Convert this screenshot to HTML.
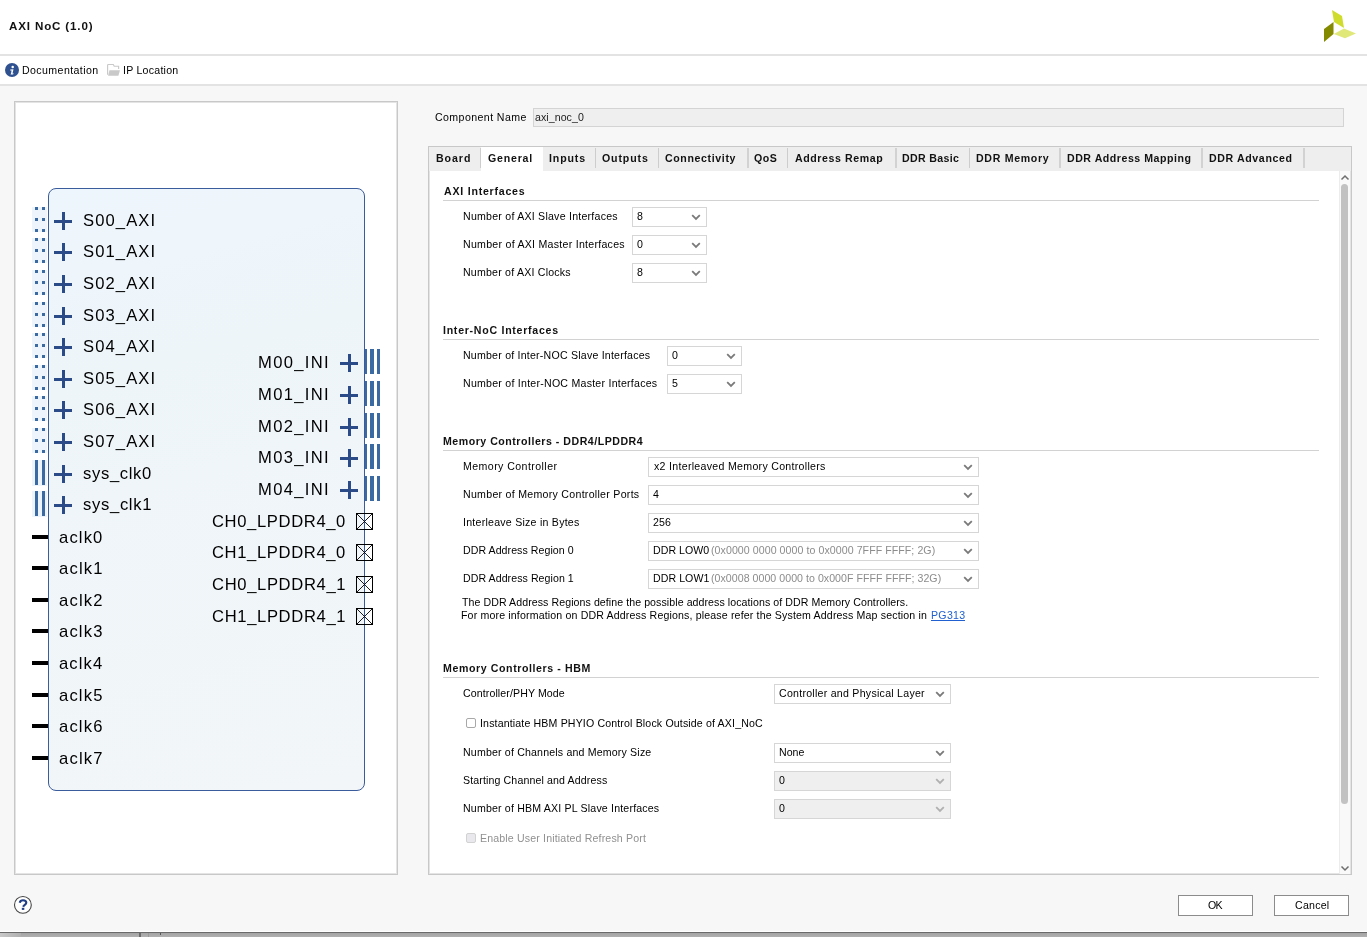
<!DOCTYPE html>
<html><head><meta charset="utf-8">
<style>
*{margin:0;padding:0;box-sizing:border-box}
html,body{width:1367px;height:937px;overflow:hidden;background:#f7f7f7;font-family:"Liberation Sans",sans-serif;color:#1e1e1e}
.abs{position:absolute}
.t{position:absolute;white-space:nowrap;will-change:transform}
.combo{position:absolute;background:#fff;border:1px solid #d6d6d6;height:20px}
.combo.dis{background:#efefef}
.sep{position:absolute;height:1px;background:#d2d2d2}
.tsep{position:absolute;top:148px;width:1px;height:20px;background:#cdcdcd}
</style></head><body>

<div class="abs" style="left:0;top:0;width:1367px;height:54px;background:#fff"></div>
<div class="abs" style="left:0;top:54px;width:1367px;height:2px;background:#e3e3e3"></div>
<div class="t" style="left:8.81px;top:20px;font-size:11.6px;line-height:11.6px;font-weight:bold;letter-spacing:0.841px;color:#111;">AXI NoC (1.0)</div>
<svg class="abs" style="left:1320px;top:8px" width="40" height="38" viewBox="1320 8 40 38">
<polygon points="1332,10 1342,16 1344,28 1334,22" fill="#d0dc2c"/>
<polygon points="1324,29 1333.5,22 1333.5,34 1324,42" fill="#848a00"/>
<polygon points="1333.8,34 1344,28.5 1356,33.4 1345,38.3" fill="#e0e87a"/>
</svg>
<div class="abs" style="left:0;top:56px;width:1367px;height:28px;background:#fff"></div>
<div class="abs" style="left:0;top:84px;width:1367px;height:2px;background:#e3e3e3"></div>
<svg class="abs" style="left:5px;top:63px" width="14" height="14" viewBox="0 0 14 14">
<circle cx="7" cy="7" r="7" fill="#2f5190"/>
<path d="M5.3 6.5 L8.5 6.2 L7.5 10.5 L8.7 10.3 L8.1 11.4 L5.5 11.5 L6.0 10.6 L6.6 7.5 L5.2 7.5 Z" fill="#fff"/>
<circle cx="7.7" cy="3.9" r="1.25" fill="#fff"/>
</svg>
<div class="t" style="left:21.83px;top:65px;font-size:10.6px;line-height:10.6px;letter-spacing:0.405px;color:#000;">Documentation</div>
<svg class="abs" style="left:107px;top:63px" width="15" height="14" viewBox="0 0 15 14">
<path d="M0.6 11.8 L0.6 2.2 Q0.6 1.5 1.3 1.5 L6.3 1.5 L7.2 3.2 L11.6 3.2 L11.6 5.9" fill="none" stroke="#c9c9c9" stroke-width="1.15"/>
<path d="M2.4 7.2 L13 7.2 L11.4 12.8 L1.1 12.8 Z" fill="#c9c9c9"/>
</svg>
<div class="t" style="left:123.42px;top:65px;font-size:10.6px;line-height:10.6px;letter-spacing:0.243px;color:#000;">IP Location</div>
<div class="abs" style="left:14px;top:101px;width:384px;height:774px;background:#fff;border:1px solid #c8c8c8;box-shadow:inset 0 0 0 1px #e4e4e4"></div>
<div class="abs" style="left:48px;top:188px;width:317px;height:603px;border:1px solid #3a5b9c;border-radius:8px;background:linear-gradient(165deg,#eef6fd 0%,#eef5f9 30%,#f2f6f8 100%)"></div>
<div class="abs" style="left:32px;top:207px;width:15px;height:25px;background:#edf4fb"></div>
<div class="abs" style="left:35px;top:207px;width:3px;height:3px;background:#3b6aa2"></div>
<div class="abs" style="left:42px;top:207px;width:3px;height:3px;background:#3b6aa2"></div>
<div class="abs" style="left:35px;top:218px;width:3px;height:3px;background:#3b6aa2"></div>
<div class="abs" style="left:42px;top:218px;width:3px;height:3px;background:#3b6aa2"></div>
<div class="abs" style="left:35px;top:229px;width:3px;height:3px;background:#3b6aa2"></div>
<div class="abs" style="left:42px;top:229px;width:3px;height:3px;background:#3b6aa2"></div>
<div class="abs" style="left:54px;top:220px;width:18px;height:3px;background:#2b4a88"></div><div class="abs" style="left:62px;top:212px;width:3px;height:18px;background:#2b4a88"></div>
<div class="t" style="left:82.85px;top:213px;font-size:16.6px;line-height:16.6px;letter-spacing:1.094px;color:#000;">S00_AXI</div>
<div class="abs" style="left:32px;top:238px;width:15px;height:25px;background:#edf4fb"></div>
<div class="abs" style="left:35px;top:238px;width:3px;height:3px;background:#3b6aa2"></div>
<div class="abs" style="left:42px;top:238px;width:3px;height:3px;background:#3b6aa2"></div>
<div class="abs" style="left:35px;top:249px;width:3px;height:3px;background:#3b6aa2"></div>
<div class="abs" style="left:42px;top:249px;width:3px;height:3px;background:#3b6aa2"></div>
<div class="abs" style="left:35px;top:260px;width:3px;height:3px;background:#3b6aa2"></div>
<div class="abs" style="left:42px;top:260px;width:3px;height:3px;background:#3b6aa2"></div>
<div class="abs" style="left:54px;top:251px;width:18px;height:3px;background:#2b4a88"></div><div class="abs" style="left:62px;top:243px;width:3px;height:18px;background:#2b4a88"></div>
<div class="t" style="left:82.85px;top:244px;font-size:16.6px;line-height:16.6px;letter-spacing:1.094px;color:#000;">S01_AXI</div>
<div class="abs" style="left:32px;top:270px;width:15px;height:25px;background:#edf4fb"></div>
<div class="abs" style="left:35px;top:270px;width:3px;height:3px;background:#3b6aa2"></div>
<div class="abs" style="left:42px;top:270px;width:3px;height:3px;background:#3b6aa2"></div>
<div class="abs" style="left:35px;top:281px;width:3px;height:3px;background:#3b6aa2"></div>
<div class="abs" style="left:42px;top:281px;width:3px;height:3px;background:#3b6aa2"></div>
<div class="abs" style="left:35px;top:292px;width:3px;height:3px;background:#3b6aa2"></div>
<div class="abs" style="left:42px;top:292px;width:3px;height:3px;background:#3b6aa2"></div>
<div class="abs" style="left:54px;top:283px;width:18px;height:3px;background:#2b4a88"></div><div class="abs" style="left:62px;top:275px;width:3px;height:18px;background:#2b4a88"></div>
<div class="t" style="left:82.85px;top:276px;font-size:16.6px;line-height:16.6px;letter-spacing:1.094px;color:#000;">S02_AXI</div>
<div class="abs" style="left:32px;top:302px;width:15px;height:25px;background:#edf4fb"></div>
<div class="abs" style="left:35px;top:302px;width:3px;height:3px;background:#3b6aa2"></div>
<div class="abs" style="left:42px;top:302px;width:3px;height:3px;background:#3b6aa2"></div>
<div class="abs" style="left:35px;top:313px;width:3px;height:3px;background:#3b6aa2"></div>
<div class="abs" style="left:42px;top:313px;width:3px;height:3px;background:#3b6aa2"></div>
<div class="abs" style="left:35px;top:324px;width:3px;height:3px;background:#3b6aa2"></div>
<div class="abs" style="left:42px;top:324px;width:3px;height:3px;background:#3b6aa2"></div>
<div class="abs" style="left:54px;top:315px;width:18px;height:3px;background:#2b4a88"></div><div class="abs" style="left:62px;top:307px;width:3px;height:18px;background:#2b4a88"></div>
<div class="t" style="left:82.85px;top:308px;font-size:16.6px;line-height:16.6px;letter-spacing:1.094px;color:#000;">S03_AXI</div>
<div class="abs" style="left:32px;top:333px;width:15px;height:25px;background:#edf4fb"></div>
<div class="abs" style="left:35px;top:333px;width:3px;height:3px;background:#3b6aa2"></div>
<div class="abs" style="left:42px;top:333px;width:3px;height:3px;background:#3b6aa2"></div>
<div class="abs" style="left:35px;top:344px;width:3px;height:3px;background:#3b6aa2"></div>
<div class="abs" style="left:42px;top:344px;width:3px;height:3px;background:#3b6aa2"></div>
<div class="abs" style="left:35px;top:355px;width:3px;height:3px;background:#3b6aa2"></div>
<div class="abs" style="left:42px;top:355px;width:3px;height:3px;background:#3b6aa2"></div>
<div class="abs" style="left:54px;top:346px;width:18px;height:3px;background:#2b4a88"></div><div class="abs" style="left:62px;top:338px;width:3px;height:18px;background:#2b4a88"></div>
<div class="t" style="left:82.85px;top:339px;font-size:16.6px;line-height:16.6px;letter-spacing:1.094px;color:#000;">S04_AXI</div>
<div class="abs" style="left:32px;top:365px;width:15px;height:25px;background:#edf4fb"></div>
<div class="abs" style="left:35px;top:365px;width:3px;height:3px;background:#3b6aa2"></div>
<div class="abs" style="left:42px;top:365px;width:3px;height:3px;background:#3b6aa2"></div>
<div class="abs" style="left:35px;top:376px;width:3px;height:3px;background:#3b6aa2"></div>
<div class="abs" style="left:42px;top:376px;width:3px;height:3px;background:#3b6aa2"></div>
<div class="abs" style="left:35px;top:387px;width:3px;height:3px;background:#3b6aa2"></div>
<div class="abs" style="left:42px;top:387px;width:3px;height:3px;background:#3b6aa2"></div>
<div class="abs" style="left:54px;top:378px;width:18px;height:3px;background:#2b4a88"></div><div class="abs" style="left:62px;top:370px;width:3px;height:18px;background:#2b4a88"></div>
<div class="t" style="left:82.85px;top:371px;font-size:16.6px;line-height:16.6px;letter-spacing:1.094px;color:#000;">S05_AXI</div>
<div class="abs" style="left:32px;top:396px;width:15px;height:25px;background:#edf4fb"></div>
<div class="abs" style="left:35px;top:396px;width:3px;height:3px;background:#3b6aa2"></div>
<div class="abs" style="left:42px;top:396px;width:3px;height:3px;background:#3b6aa2"></div>
<div class="abs" style="left:35px;top:407px;width:3px;height:3px;background:#3b6aa2"></div>
<div class="abs" style="left:42px;top:407px;width:3px;height:3px;background:#3b6aa2"></div>
<div class="abs" style="left:35px;top:418px;width:3px;height:3px;background:#3b6aa2"></div>
<div class="abs" style="left:42px;top:418px;width:3px;height:3px;background:#3b6aa2"></div>
<div class="abs" style="left:54px;top:409px;width:18px;height:3px;background:#2b4a88"></div><div class="abs" style="left:62px;top:401px;width:3px;height:18px;background:#2b4a88"></div>
<div class="t" style="left:82.85px;top:402px;font-size:16.6px;line-height:16.6px;letter-spacing:1.094px;color:#000;">S06_AXI</div>
<div class="abs" style="left:32px;top:428px;width:15px;height:25px;background:#edf4fb"></div>
<div class="abs" style="left:35px;top:428px;width:3px;height:3px;background:#3b6aa2"></div>
<div class="abs" style="left:42px;top:428px;width:3px;height:3px;background:#3b6aa2"></div>
<div class="abs" style="left:35px;top:439px;width:3px;height:3px;background:#3b6aa2"></div>
<div class="abs" style="left:42px;top:439px;width:3px;height:3px;background:#3b6aa2"></div>
<div class="abs" style="left:35px;top:450px;width:3px;height:3px;background:#3b6aa2"></div>
<div class="abs" style="left:42px;top:450px;width:3px;height:3px;background:#3b6aa2"></div>
<div class="abs" style="left:54px;top:441px;width:18px;height:3px;background:#2b4a88"></div><div class="abs" style="left:62px;top:433px;width:3px;height:18px;background:#2b4a88"></div>
<div class="t" style="left:82.85px;top:434px;font-size:16.6px;line-height:16.6px;letter-spacing:1.094px;color:#000;">S07_AXI</div>
<div class="abs" style="left:32px;top:460px;width:15px;height:26px;background:#edf4fb"></div>
<div class="abs" style="left:35px;top:460px;width:3px;height:25px;background:#3b6aa2"></div>
<div class="abs" style="left:42px;top:460px;width:3px;height:25px;background:#3b6aa2"></div>
<div class="abs" style="left:54px;top:473px;width:18px;height:3px;background:#2b4a88"></div><div class="abs" style="left:62px;top:465px;width:3px;height:18px;background:#2b4a88"></div>
<div class="t" style="left:83.24px;top:466px;font-size:16.6px;line-height:16.6px;letter-spacing:0.665px;color:#000;">sys_clk0</div>
<div class="abs" style="left:32px;top:491px;width:15px;height:26px;background:#edf4fb"></div>
<div class="abs" style="left:35px;top:491px;width:3px;height:25px;background:#3b6aa2"></div>
<div class="abs" style="left:42px;top:491px;width:3px;height:25px;background:#3b6aa2"></div>
<div class="abs" style="left:54px;top:504px;width:18px;height:3px;background:#2b4a88"></div><div class="abs" style="left:62px;top:496px;width:3px;height:18px;background:#2b4a88"></div>
<div class="t" style="left:83.24px;top:497px;font-size:16.6px;line-height:16.6px;letter-spacing:0.689px;color:#000;">sys_clk1</div>
<div class="abs" style="left:32px;top:535px;width:16px;height:4px;background:#000"></div>
<div class="t" style="left:59.09px;top:530px;font-size:16.6px;line-height:16.6px;letter-spacing:1.150px;color:#000;">aclk0</div>
<div class="abs" style="left:32px;top:566px;width:16px;height:4px;background:#000"></div>
<div class="t" style="left:59.09px;top:561px;font-size:16.6px;line-height:16.6px;letter-spacing:1.191px;color:#000;">aclk1</div>
<div class="abs" style="left:32px;top:598px;width:16px;height:4px;background:#000"></div>
<div class="t" style="left:59.09px;top:593px;font-size:16.6px;line-height:16.6px;letter-spacing:1.197px;color:#000;">aclk2</div>
<div class="abs" style="left:32px;top:629px;width:16px;height:4px;background:#000"></div>
<div class="t" style="left:59.09px;top:624px;font-size:16.6px;line-height:16.6px;letter-spacing:1.171px;color:#000;">aclk3</div>
<div class="abs" style="left:32px;top:661px;width:16px;height:4px;background:#000"></div>
<div class="t" style="left:59.09px;top:656px;font-size:16.6px;line-height:16.6px;letter-spacing:1.110px;color:#000;">aclk4</div>
<div class="abs" style="left:32px;top:693px;width:16px;height:4px;background:#000"></div>
<div class="t" style="left:59.09px;top:688px;font-size:16.6px;line-height:16.6px;letter-spacing:1.162px;color:#000;">aclk5</div>
<div class="abs" style="left:32px;top:724px;width:16px;height:4px;background:#000"></div>
<div class="t" style="left:59.09px;top:719px;font-size:16.6px;line-height:16.6px;letter-spacing:1.171px;color:#000;">aclk6</div>
<div class="abs" style="left:32px;top:756px;width:16px;height:4px;background:#000"></div>
<div class="t" style="left:59.09px;top:751px;font-size:16.6px;line-height:16.6px;letter-spacing:1.197px;color:#000;">aclk7</div>
<div class="abs" style="left:365px;top:349px;width:2px;height:25px;background:#3b6aa2"></div>
<div class="abs" style="left:370px;top:349px;width:4px;height:25px;background:#3b6aa2"></div>
<div class="abs" style="left:377px;top:349px;width:3px;height:25px;background:#3b6aa2"></div>
<div class="abs" style="left:340px;top:362px;width:18px;height:3px;background:#2b4a88"></div><div class="abs" style="left:348px;top:354px;width:3px;height:18px;background:#2b4a88"></div>
<div class="t" style="left:258.44px;top:355px;font-size:16.6px;line-height:16.6px;letter-spacing:1.326px;color:#000;">M00_INI</div>
<div class="abs" style="left:365px;top:381px;width:2px;height:25px;background:#3b6aa2"></div>
<div class="abs" style="left:370px;top:381px;width:4px;height:25px;background:#3b6aa2"></div>
<div class="abs" style="left:377px;top:381px;width:3px;height:25px;background:#3b6aa2"></div>
<div class="abs" style="left:340px;top:394px;width:18px;height:3px;background:#2b4a88"></div><div class="abs" style="left:348px;top:386px;width:3px;height:18px;background:#2b4a88"></div>
<div class="t" style="left:258.44px;top:387px;font-size:16.6px;line-height:16.6px;letter-spacing:1.326px;color:#000;">M01_INI</div>
<div class="abs" style="left:365px;top:413px;width:2px;height:25px;background:#3b6aa2"></div>
<div class="abs" style="left:370px;top:413px;width:4px;height:25px;background:#3b6aa2"></div>
<div class="abs" style="left:377px;top:413px;width:3px;height:25px;background:#3b6aa2"></div>
<div class="abs" style="left:340px;top:426px;width:18px;height:3px;background:#2b4a88"></div><div class="abs" style="left:348px;top:418px;width:3px;height:18px;background:#2b4a88"></div>
<div class="t" style="left:258.44px;top:419px;font-size:16.6px;line-height:16.6px;letter-spacing:1.326px;color:#000;">M02_INI</div>
<div class="abs" style="left:365px;top:444px;width:2px;height:25px;background:#3b6aa2"></div>
<div class="abs" style="left:370px;top:444px;width:4px;height:25px;background:#3b6aa2"></div>
<div class="abs" style="left:377px;top:444px;width:3px;height:25px;background:#3b6aa2"></div>
<div class="abs" style="left:340px;top:457px;width:18px;height:3px;background:#2b4a88"></div><div class="abs" style="left:348px;top:449px;width:3px;height:18px;background:#2b4a88"></div>
<div class="t" style="left:258.44px;top:450px;font-size:16.6px;line-height:16.6px;letter-spacing:1.326px;color:#000;">M03_INI</div>
<div class="abs" style="left:365px;top:476px;width:2px;height:25px;background:#3b6aa2"></div>
<div class="abs" style="left:370px;top:476px;width:4px;height:25px;background:#3b6aa2"></div>
<div class="abs" style="left:377px;top:476px;width:3px;height:25px;background:#3b6aa2"></div>
<div class="abs" style="left:340px;top:489px;width:18px;height:3px;background:#2b4a88"></div><div class="abs" style="left:348px;top:481px;width:3px;height:18px;background:#2b4a88"></div>
<div class="t" style="left:258.44px;top:482px;font-size:16.6px;line-height:16.6px;letter-spacing:1.326px;color:#000;">M04_INI</div>
<svg class="abs" style="left:356px;top:513px" width="17" height="17" viewBox="0 0 17 17"><rect x="0.5" y="0.5" width="16" height="16" fill="none" stroke="#000" stroke-width="1"/><path d="M1 1 L16 16 M16 1 L1 16" stroke="#000" stroke-width="0.9"/></svg>
<div class="t" style="left:212.06px;top:514px;font-size:16.6px;line-height:16.6px;letter-spacing:0.635px;color:#000;">CH0_LPDDR4_0</div>
<svg class="abs" style="left:356px;top:544px" width="17" height="17" viewBox="0 0 17 17"><rect x="0.5" y="0.5" width="16" height="16" fill="none" stroke="#000" stroke-width="1"/><path d="M1 1 L16 16 M16 1 L1 16" stroke="#000" stroke-width="0.9"/></svg>
<div class="t" style="left:212.06px;top:545px;font-size:16.6px;line-height:16.6px;letter-spacing:0.635px;color:#000;">CH1_LPDDR4_0</div>
<svg class="abs" style="left:356px;top:576px" width="17" height="17" viewBox="0 0 17 17"><rect x="0.5" y="0.5" width="16" height="16" fill="none" stroke="#000" stroke-width="1"/><path d="M1 1 L16 16 M16 1 L1 16" stroke="#000" stroke-width="0.9"/></svg>
<div class="t" style="left:212.06px;top:577px;font-size:16.6px;line-height:16.6px;letter-spacing:0.650px;color:#000;">CH0_LPDDR4_1</div>
<svg class="abs" style="left:356px;top:608px" width="17" height="17" viewBox="0 0 17 17"><rect x="0.5" y="0.5" width="16" height="16" fill="none" stroke="#000" stroke-width="1"/><path d="M1 1 L16 16 M16 1 L1 16" stroke="#000" stroke-width="0.9"/></svg>
<div class="t" style="left:212.06px;top:609px;font-size:16.6px;line-height:16.6px;letter-spacing:0.650px;color:#000;">CH1_LPDDR4_1</div>
<svg class="abs" style="left:13px;top:895px" width="20" height="20" viewBox="0 0 20 20">
<circle cx="9.9" cy="9.9" r="8.4" fill="#fff" stroke="#454545" stroke-width="1.1"/>
<path d="M6.7 7.7 C7.1 6.0 8.3 5.2 10 5.2 C11.9 5.2 13.3 6.2 13.3 7.8 C13.3 9.6 10.9 9.9 10.1 11.7" fill="none" stroke="#213f86" stroke-width="2.1"/>
<rect x="8.8" y="12.8" width="2.5" height="2.1" fill="#213f86"/>
</svg>
<div class="t" style="left:435.06px;top:112px;font-size:10.6px;line-height:10.6px;letter-spacing:0.414px;color:#000;">Component Name</div>
<div class="abs" style="left:533px;top:108px;width:811px;height:19px;background:#efefef;border:1px solid #d4d4d4"></div>
<div class="t" style="left:535.25px;top:112px;font-size:10.6px;line-height:10.6px;letter-spacing:0.067px;color:#222;">axi_noc_0</div>
<div class="abs" style="left:428px;top:146px;width:924px;height:729px;background:#fff;border:1px solid #c8c8c8;box-shadow:inset 0 0 0 1px #e4e4e4"></div>
<div class="abs" style="left:429px;top:147px;width:922px;height:24px;background:#eeeeee"></div>
<div class="abs" style="left:481px;top:147px;width:62px;height:24px;background:#fff"></div>
<div class="t" style="left:436.09px;top:153px;font-size:10.6px;line-height:10.6px;font-weight:bold;letter-spacing:0.946px;color:#111;">Board</div>
<div class="tsep" style="left:480px"></div>
<div class="t" style="left:487.57px;top:153px;font-size:10.6px;line-height:10.6px;font-weight:bold;letter-spacing:0.785px;color:#111;">General</div>
<div class="t" style="left:548.79px;top:153px;font-size:10.6px;line-height:10.6px;font-weight:bold;letter-spacing:0.870px;color:#111;">Inputs</div>
<div class="tsep" style="left:595px"></div>
<div class="t" style="left:602.37px;top:153px;font-size:10.6px;line-height:10.6px;font-weight:bold;letter-spacing:0.874px;color:#111;">Outputs</div>
<div class="tsep" style="left:658px"></div>
<div class="t" style="left:665.47px;top:153px;font-size:10.6px;line-height:10.6px;font-weight:bold;letter-spacing:0.626px;color:#111;">Connectivity</div>
<div class="tsep" style="left:747px;width:2px;background:#d2d2d2"></div>
<div class="t" style="left:754.27px;top:153px;font-size:10.6px;line-height:10.6px;font-weight:bold;letter-spacing:0.529px;color:#111;">QoS</div>
<div class="tsep" style="left:787px"></div>
<div class="t" style="left:795.04px;top:153px;font-size:10.6px;line-height:10.6px;font-weight:bold;letter-spacing:0.583px;color:#111;">Address Remap</div>
<div class="tsep" style="left:895px;width:2px;background:#d2d2d2"></div>
<div class="t" style="left:901.69px;top:153px;font-size:10.6px;line-height:10.6px;font-weight:bold;letter-spacing:0.353px;color:#111;">DDR Basic</div>
<div class="tsep" style="left:969px"></div>
<div class="t" style="left:976.09px;top:153px;font-size:10.6px;line-height:10.6px;font-weight:bold;letter-spacing:0.690px;color:#111;">DDR Memory</div>
<div class="tsep" style="left:1059px;width:2px;background:#d2d2d2"></div>
<div class="t" style="left:1066.79px;top:153px;font-size:10.6px;line-height:10.6px;font-weight:bold;letter-spacing:0.532px;color:#111;">DDR Address Mapping</div>
<div class="tsep" style="left:1201px;width:2px;background:#d2d2d2"></div>
<div class="t" style="left:1208.69px;top:153px;font-size:10.6px;line-height:10.6px;font-weight:bold;letter-spacing:0.622px;color:#111;">DDR Advanced</div>
<div class="tsep" style="left:1303px;width:2px;background:#d2d2d2"></div>
<div class="abs" style="left:1339px;top:171px;width:11px;height:703px;background:#f9f9f9;border-left:1px solid #ececec"></div>
<svg class="abs" style="left:1340px;top:173px" width="10" height="9" viewBox="0 0 10 9"><path d="M1.5 6.5 L5 3 L8.5 6.5" fill="none" stroke="#6e6e6e" stroke-width="1.5"/></svg>
<div class="abs" style="left:1341px;top:184px;width:7px;height:620px;background:#c2c2c2;border-radius:3.5px"></div>
<svg class="abs" style="left:1340px;top:864px" width="10" height="9" viewBox="0 0 10 9"><path d="M1.5 2.5 L5 6 L8.5 2.5" fill="none" stroke="#6e6e6e" stroke-width="1.5"/></svg>
<div class="t" style="left:443.74px;top:186px;font-size:10.6px;line-height:10.6px;font-weight:bold;letter-spacing:0.769px;color:#111;">AXI Interfaces</div>
<div class="sep" style="left:443px;top:200px;width:876px"></div>
<div class="t" style="left:463.03px;top:211px;font-size:10.6px;line-height:10.6px;letter-spacing:0.234px;color:#000;">Number of AXI Slave Interfaces</div>
<div class="combo" style="left:632px;top:207px;width:75px;height:20px"></div><div class="t" style="left:637.24px;top:211px;font-size:10.6px;line-height:10.6px;letter-spacing:0.026px;color:#000;">8</div><svg class="abs" style="left:691px;top:214px" width="10" height="7" viewBox="0 0 10 7"><path d="M1.2 1.2 L5 4.9 L8.8 1.2" fill="none" stroke="#7a7a7a" stroke-width="1.8"/></svg>
<div class="t" style="left:463.03px;top:239px;font-size:10.6px;line-height:10.6px;letter-spacing:0.264px;color:#000;">Number of AXI Master Interfaces</div>
<div class="combo" style="left:632px;top:235px;width:75px;height:20px"></div><div class="t" style="left:637.29px;top:239px;font-size:10.6px;line-height:10.6px;letter-spacing:-0.067px;color:#000;">0</div><svg class="abs" style="left:691px;top:242px" width="10" height="7" viewBox="0 0 10 7"><path d="M1.2 1.2 L5 4.9 L8.8 1.2" fill="none" stroke="#7a7a7a" stroke-width="1.8"/></svg>
<div class="t" style="left:463.03px;top:267px;font-size:10.6px;line-height:10.6px;letter-spacing:0.210px;color:#000;">Number of AXI Clocks</div>
<div class="combo" style="left:632px;top:263px;width:75px;height:20px"></div><div class="t" style="left:637.24px;top:267px;font-size:10.6px;line-height:10.6px;letter-spacing:0.026px;color:#000;">8</div><svg class="abs" style="left:691px;top:270px" width="10" height="7" viewBox="0 0 10 7"><path d="M1.2 1.2 L5 4.9 L8.8 1.2" fill="none" stroke="#7a7a7a" stroke-width="1.8"/></svg>
<div class="t" style="left:443.29px;top:325px;font-size:10.6px;line-height:10.6px;font-weight:bold;letter-spacing:0.728px;color:#111;">Inter-NoC Interfaces</div>
<div class="sep" style="left:443px;top:339px;width:876px"></div>
<div class="t" style="left:463.03px;top:350px;font-size:10.6px;line-height:10.6px;letter-spacing:0.216px;color:#000;">Number of Inter-NOC Slave Interfaces</div>
<div class="combo" style="left:667px;top:346px;width:75px;height:20px"></div><div class="t" style="left:672.29px;top:350px;font-size:10.6px;line-height:10.6px;letter-spacing:-0.067px;color:#000;">0</div><svg class="abs" style="left:726px;top:353px" width="10" height="7" viewBox="0 0 10 7"><path d="M1.2 1.2 L5 4.9 L8.8 1.2" fill="none" stroke="#7a7a7a" stroke-width="1.8"/></svg>
<div class="t" style="left:463.03px;top:378px;font-size:10.6px;line-height:10.6px;letter-spacing:0.242px;color:#000;">Number of Inter-NOC Master Interfaces</div>
<div class="combo" style="left:667px;top:374px;width:75px;height:20px"></div><div class="t" style="left:672.28px;top:378px;font-size:10.6px;line-height:10.6px;letter-spacing:-0.026px;color:#000;">5</div><svg class="abs" style="left:726px;top:381px" width="10" height="7" viewBox="0 0 10 7"><path d="M1.2 1.2 L5 4.9 L8.8 1.2" fill="none" stroke="#7a7a7a" stroke-width="1.8"/></svg>
<div class="t" style="left:443.29px;top:436px;font-size:10.6px;line-height:10.6px;font-weight:bold;letter-spacing:0.516px;color:#111;">Memory Controllers - DDR4/LPDDR4</div>
<div class="sep" style="left:443px;top:450px;width:876px"></div>
<div class="t" style="left:463.03px;top:461px;font-size:10.6px;line-height:10.6px;letter-spacing:0.429px;color:#000;">Memory Controller</div>
<div class="combo" style="left:648px;top:457px;width:331px;height:20px"></div><div class="t" style="left:653.58px;top:461px;font-size:10.6px;line-height:10.6px;letter-spacing:0.297px;color:#000;">x2 Interleaved Memory Controllers</div><svg class="abs" style="left:963px;top:464px" width="10" height="7" viewBox="0 0 10 7"><path d="M1.2 1.2 L5 4.9 L8.8 1.2" fill="none" stroke="#7a7a7a" stroke-width="1.8"/></svg>
<div class="t" style="left:463.03px;top:489px;font-size:10.6px;line-height:10.6px;letter-spacing:0.280px;color:#000;">Number of Memory Controller Ports</div>
<div class="combo" style="left:648px;top:485px;width:331px;height:20px"></div><div class="t" style="left:653.46px;top:489px;font-size:10.6px;line-height:10.6px;letter-spacing:-0.341px;color:#000;">4</div><svg class="abs" style="left:963px;top:492px" width="10" height="7" viewBox="0 0 10 7"><path d="M1.2 1.2 L5 4.9 L8.8 1.2" fill="none" stroke="#7a7a7a" stroke-width="1.8"/></svg>
<div class="t" style="left:462.92px;top:517px;font-size:10.6px;line-height:10.6px;letter-spacing:0.243px;color:#000;">Interleave Size in Bytes</div>
<div class="combo" style="left:648px;top:513px;width:331px;height:20px"></div><div class="t" style="left:653.17px;top:517px;font-size:10.6px;line-height:10.6px;letter-spacing:0.157px;color:#000;">256</div><svg class="abs" style="left:963px;top:520px" width="10" height="7" viewBox="0 0 10 7"><path d="M1.2 1.2 L5 4.9 L8.8 1.2" fill="none" stroke="#7a7a7a" stroke-width="1.8"/></svg>
<div class="t" style="left:463.03px;top:545px;font-size:10.6px;line-height:10.6px;letter-spacing:0.059px;color:#000;">DDR Address Region 0</div>
<div class="combo" style="left:648px;top:541px;width:331px;height:20px"></div><div class="t" style="left:652.83px;top:545px;font-size:10.6px;line-height:10.6px;letter-spacing:0.048px;color:#000;">DDR LOW0</div><div class="t" style="left:711.44px;top:545px;font-size:10.6px;line-height:10.6px;letter-spacing:0.068px;color:#8c8c8c;">(0x0000 0000 0000 to 0x0000 7FFF FFFF; 2G)</div><svg class="abs" style="left:963px;top:548px" width="10" height="7" viewBox="0 0 10 7"><path d="M1.2 1.2 L5 4.9 L8.8 1.2" fill="none" stroke="#7a7a7a" stroke-width="1.8"/></svg>
<div class="t" style="left:463.03px;top:573px;font-size:10.6px;line-height:10.6px;letter-spacing:0.064px;color:#000;">DDR Address Region 1</div>
<div class="combo" style="left:648px;top:569px;width:331px;height:20px"></div><div class="t" style="left:652.83px;top:573px;font-size:10.6px;line-height:10.6px;letter-spacing:0.062px;color:#000;">DDR LOW1</div><div class="t" style="left:711.44px;top:573px;font-size:10.6px;line-height:10.6px;letter-spacing:0.041px;color:#8c8c8c;">(0x0008 0000 0000 to 0x000F FFFF FFFF; 32G)</div><svg class="abs" style="left:963px;top:576px" width="10" height="7" viewBox="0 0 10 7"><path d="M1.2 1.2 L5 4.9 L8.8 1.2" fill="none" stroke="#7a7a7a" stroke-width="1.8"/></svg>
<div class="t" style="left:462.06px;top:597px;font-size:10.6px;line-height:10.6px;letter-spacing:0.073px;color:#000;">The DDR Address Regions define the possible address locations of DDR Memory Controllers.</div>
<div class="t" style="left:461.43px;top:610px;font-size:10.6px;line-height:10.6px;letter-spacing:0.152px;color:#000;">For more information on DDR Address Regions, please refer the System Address Map section in</div>
<div class="t" style="left:930.63px;top:610px;font-size:10.6px;line-height:10.6px;letter-spacing:0.309px;color:#2060d0;">PG313</div>
<div class="abs" style="left:931px;top:620px;width:34px;height:1px;background:#2060d0"></div>
<div class="t" style="left:443.29px;top:663px;font-size:10.6px;line-height:10.6px;font-weight:bold;letter-spacing:0.597px;color:#111;">Memory Controllers - HBM</div>
<div class="sep" style="left:443px;top:677px;width:876px"></div>
<div class="t" style="left:463.36px;top:688px;font-size:10.6px;line-height:10.6px;letter-spacing:0.103px;color:#000;">Controller/PHY Mode</div>
<div class="combo" style="left:774px;top:684px;width:177px;height:20px"></div><div class="t" style="left:779.16px;top:688px;font-size:10.6px;line-height:10.6px;letter-spacing:0.259px;color:#000;">Controller and Physical Layer</div><svg class="abs" style="left:935px;top:691px" width="10" height="7" viewBox="0 0 10 7"><path d="M1.2 1.2 L5 4.9 L8.8 1.2" fill="none" stroke="#7a7a7a" stroke-width="1.8"/></svg>
<div class="abs" style="left:466px;top:718px;width:10px;height:10px;background:#fff;border:1px solid #a8a8a8;border-radius:2px"></div>
<div class="t" style="left:479.82px;top:718px;font-size:10.6px;line-height:10.6px;letter-spacing:0.145px;color:#000;">Instantiate HBM PHYIO Control Block Outside of AXI_NoC</div>
<div class="t" style="left:463.03px;top:747px;font-size:10.6px;line-height:10.6px;letter-spacing:0.173px;color:#000;">Number of Channels and Memory Size</div>
<div class="combo" style="left:774px;top:743px;width:177px;height:20px"></div><div class="t" style="left:778.83px;top:747px;font-size:10.6px;line-height:10.6px;letter-spacing:-0.000px;color:#000;">None</div><svg class="abs" style="left:935px;top:750px" width="10" height="7" viewBox="0 0 10 7"><path d="M1.2 1.2 L5 4.9 L8.8 1.2" fill="none" stroke="#7a7a7a" stroke-width="1.8"/></svg>
<div class="t" style="left:463.42px;top:775px;font-size:10.6px;line-height:10.6px;letter-spacing:0.127px;color:#000;">Starting Channel and Address</div>
<div class="combo dis" style="left:774px;top:771px;width:177px;height:20px"></div><div class="t" style="left:779.29px;top:775px;font-size:10.6px;line-height:10.6px;letter-spacing:-0.067px;color:#000;">0</div><svg class="abs" style="left:935px;top:778px" width="10" height="7" viewBox="0 0 10 7"><path d="M1.2 1.2 L5 4.9 L8.8 1.2" fill="none" stroke="#b0b0b0" stroke-width="1.8"/></svg>
<div class="t" style="left:463.03px;top:803px;font-size:10.6px;line-height:10.6px;letter-spacing:0.177px;color:#000;">Number of HBM AXI PL Slave Interfaces</div>
<div class="combo dis" style="left:774px;top:799px;width:177px;height:20px"></div><div class="t" style="left:779.29px;top:803px;font-size:10.6px;line-height:10.6px;letter-spacing:-0.067px;color:#000;">0</div><svg class="abs" style="left:935px;top:806px" width="10" height="7" viewBox="0 0 10 7"><path d="M1.2 1.2 L5 4.9 L8.8 1.2" fill="none" stroke="#b0b0b0" stroke-width="1.8"/></svg>
<div class="abs" style="left:466px;top:833px;width:10px;height:10px;background:#e9e9ed;border:1px solid #d2d2d2;border-radius:2px"></div>
<div class="t" style="left:479.93px;top:833px;font-size:10.6px;line-height:10.6px;letter-spacing:0.155px;color:#909090;">Enable User Initiated Refresh Port</div>
<div class="abs" style="left:1178px;top:895px;width:75px;height:21px;background:#fff;border:1px solid #8c8c8c"></div>
<div class="t" style="left:1208.30px;top:900px;font-size:10.6px;line-height:10.6px;letter-spacing:-0.694px;color:#000;">OK</div>
<div class="abs" style="left:1274px;top:895px;width:75px;height:21px;background:#fff;border:1px solid #8c8c8c"></div>
<div class="t" style="left:1295.26px;top:900px;font-size:10.6px;line-height:10.6px;letter-spacing:0.250px;color:#000;">Cancel</div>
<div class="abs" style="left:0;top:931px;width:1367px;height:1px;background:#fff"></div>
<div class="abs" style="left:0;top:932px;width:1367px;height:5px;background:linear-gradient(#6a6a6a 0,#6a6a6a 1px,#a4a4a4 1px,#b0b0b0 5px)"></div>
<div class="abs" style="left:139px;top:933px;width:2px;height:4px;background:#6c6c6c"></div>
<div class="abs" style="left:148px;top:933px;width:1px;height:4px;background:#999"></div>
<div class="abs" style="left:160px;top:933px;width:1px;height:2px;background:#555"></div>
<div class="abs" style="left:0;top:933px;width:21px;height:4px;background:linear-gradient(90deg,#c8c8c8,#b0b0b0)"></div>
</body></html>
